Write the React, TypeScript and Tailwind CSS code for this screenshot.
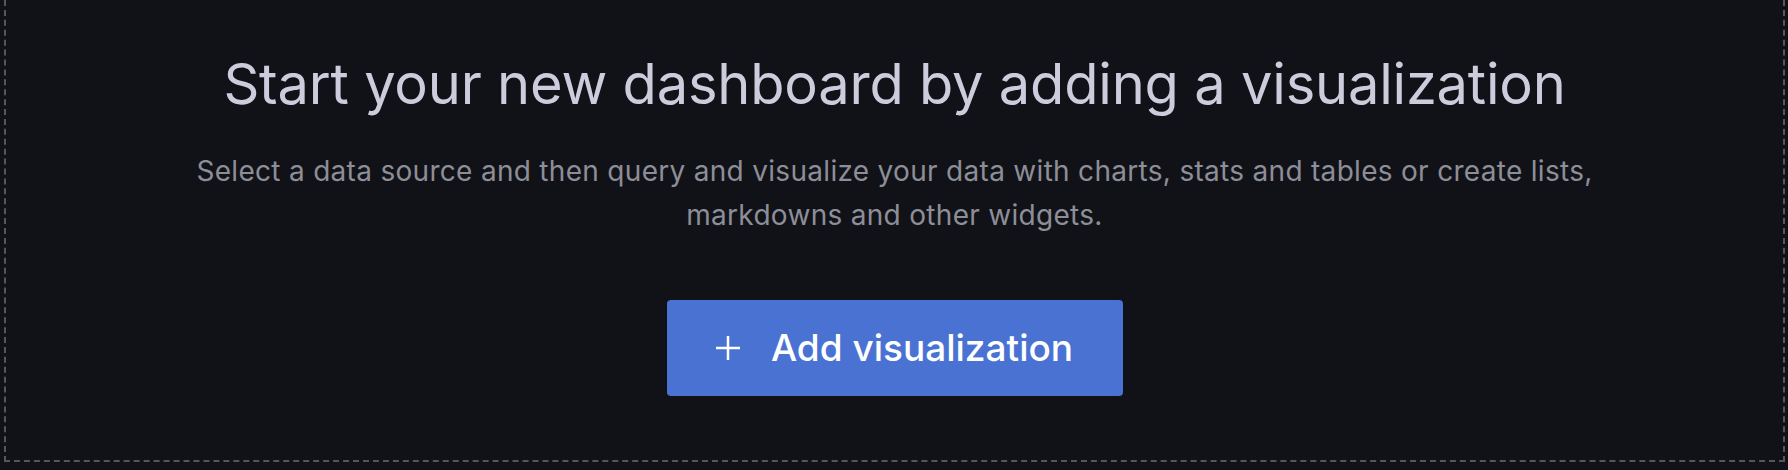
import React from "react";

const PlusIcon: React.FC = () => (
  <svg width="24" height="24" viewBox="0 0 24 24" fill="none" stroke="currentColor" strokeWidth="2.5" strokeLinecap="square">
    <path d="M12 1v22M1 12h22" />
  </svg>
);

const App: React.FC = () => {
  return (
    <div className="w-full h-[470px] bg-[#111217] pl-[4px] pr-[3px] pb-[8px] font-['Inter','Liberation_Sans',sans-serif]">
      <div className="h-full border-x-2 border-b-2 border-dashed border-[#55565c] flex flex-col items-center pt-[51px]">
        {/* Heading */}
        <h1 className="text-[56px] leading-[67px] font-normal tracking-[-0.2px] text-[#ccccdc] mb-[31px]">
          Start your new dashboard by adding a visualization
        </h1>
        <p className="max-w-[1440px] text-center text-[28px] leading-[44px] tracking-[0.3px] text-[#8d8e98]">
          Select a data source and then query and visualize your data with charts, stats and tables or create lists,
          markdowns and other widgets.
        </p>

        {/* Action */}
        <button className="mt-[63px] h-[96px] w-[456px] rounded-[4px] bg-[#4a72d3] text-white flex items-center justify-center gap-[31px] text-[37px] font-medium">
          <PlusIcon />
          <span>Add visualization</span>
        </button>
      </div>
    </div>
  );
};

export default App;
